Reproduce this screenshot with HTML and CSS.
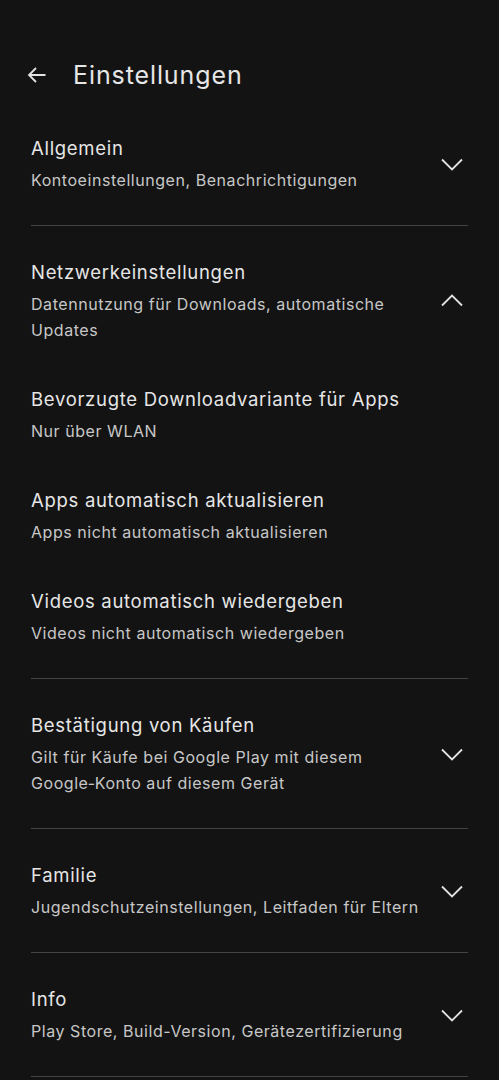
FILE: index.html
```html
<!DOCTYPE html>
<html lang="de">

<head>
    <meta charset="UTF-8">
    <meta name="viewport" content="width=device-width, initial-scale=1.0">
    <title>Einstellungen</title>
    <link rel="stylesheet" href="styles.css">
</head>

<body>
    <header class="top-bar">
        <button class="back-btn" aria-label="Zurück">
            <svg width="24" height="24" viewBox="0 0 24 24">
                <path d="M20.5 12H4M11 5l-7 7 7 7" />
            </svg>
        </button>
        <h1 class="page-title">Einstellungen</h1>
    </header>

    <section class="group">
        <div class="group-head">
            <div class="row-text">
                <div class="row-title">Allgemein</div>
                <div class="row-sub">Kontoeinstellungen, Benachrichtigungen</div>
            </div>
            <svg class="chevron" width="24" height="24" viewBox="0 0 24 24">
                <path d="M2 7.5l10 10 10-10" />
            </svg>
        </div>
    </section>

    <section class="group">
        <div class="group-head">
            <div class="row-text">
                <div class="row-title">Netzwerkeinstellungen</div>
                <div class="row-sub">Datennutzung für Downloads, automatische Updates</div>
            </div>
            <svg class="chevron" width="24" height="24" viewBox="0 0 24 24">
                <path d="M2 16.5l10-10 10 10" />
            </svg>
        </div>
        <div class="row">
            <div class="row-title">Bevorzugte Downloadvariante für Apps</div>
            <div class="row-sub">Nur über WLAN</div>
        </div>
        <div class="row">
            <div class="row-title">Apps automatisch aktualisieren</div>
            <div class="row-sub">Apps nicht automatisch aktualisieren</div>
        </div>
        <div class="row">
            <div class="row-title">Videos automatisch wiedergeben</div>
            <div class="row-sub">Videos nicht automatisch wiedergeben</div>
        </div>
    </section>

    <section class="group">
        <div class="group-head">
            <div class="row-text">
                <div class="row-title">Bestätigung von Käufen</div>
                <div class="row-sub">Gilt für Käufe bei Google Play mit diesem Google&#8209;Konto auf diesem Gerät</div>
            </div>
            <svg class="chevron" width="24" height="24" viewBox="0 0 24 24">
                <path d="M2 7.5l10 10 10-10" />
            </svg>
        </div>
    </section>

    <section class="group">
        <div class="group-head">
            <div class="row-text">
                <div class="row-title">Familie</div>
                <div class="row-sub">Jugendschutzeinstellungen, Leitfaden für Eltern</div>
            </div>
            <svg class="chevron" width="24" height="24" viewBox="0 0 24 24">
                <path d="M2 7.5l10 10 10-10" />
            </svg>
        </div>
    </section>

    <section class="group">
        <div class="group-head">
            <div class="row-text">
                <div class="row-title">Info</div>
                <div class="row-sub">Play Store, Build-Version, Gerätezertifizierung</div>
            </div>
            <svg class="chevron" width="24" height="24" viewBox="0 0 24 24">
                <path d="M2 7.5l10 10 10-10" />
            </svg>
        </div>
    </section>
</body>

</html>
```

FILE: styles.css
```css
* {
    margin: 0;
    padding: 0;
    box-sizing: border-box;
}

body {
    background-color: #131313;
    color: #e3e3e3;
    font-family: Inter, Roboto, sans-serif;
    padding: 48px 31px 0;
}

.top-bar {
    display: flex;
    align-items: center;
    height: 54px;
    gap: 24px;
}

.back-btn {
    display: flex;
    width: 24px;
    height: 24px;
    margin-left: -6px;
    background: none;
    border: none;
}

.back-btn svg {
    fill: none;
    stroke: #e3e3e3;
    stroke-width: 1.8;
}

.page-title {
    font-size: 25px;
    font-weight: 400;
    letter-spacing: 0.9px;
    color: #e6e6e6;
}

.group {
    padding: 32px 0 32px;
    border-bottom: 1px solid #444;
}

.group-head {
    display: flex;
    align-items: center;
    justify-content: space-between;
}

.row-text {
    max-width: 396px;
}

.row + .row,
.group-head + .row {
    margin-top: 42px;
}

.row-title {
    font-size: 18.5px;
    line-height: 28px;
    letter-spacing: 0.7px;
    color: #e6e6e6;
}

.row-sub {
    margin-top: 5px;
    font-size: 16px;
    line-height: 26px;
    letter-spacing: 0.55px;
    color: #c7c7c7;
}

.chevron {
    flex: none;
    margin-right: 4px;
    fill: none;
    stroke: #e3e3e3;
    stroke-width: 1.8;
}
```
